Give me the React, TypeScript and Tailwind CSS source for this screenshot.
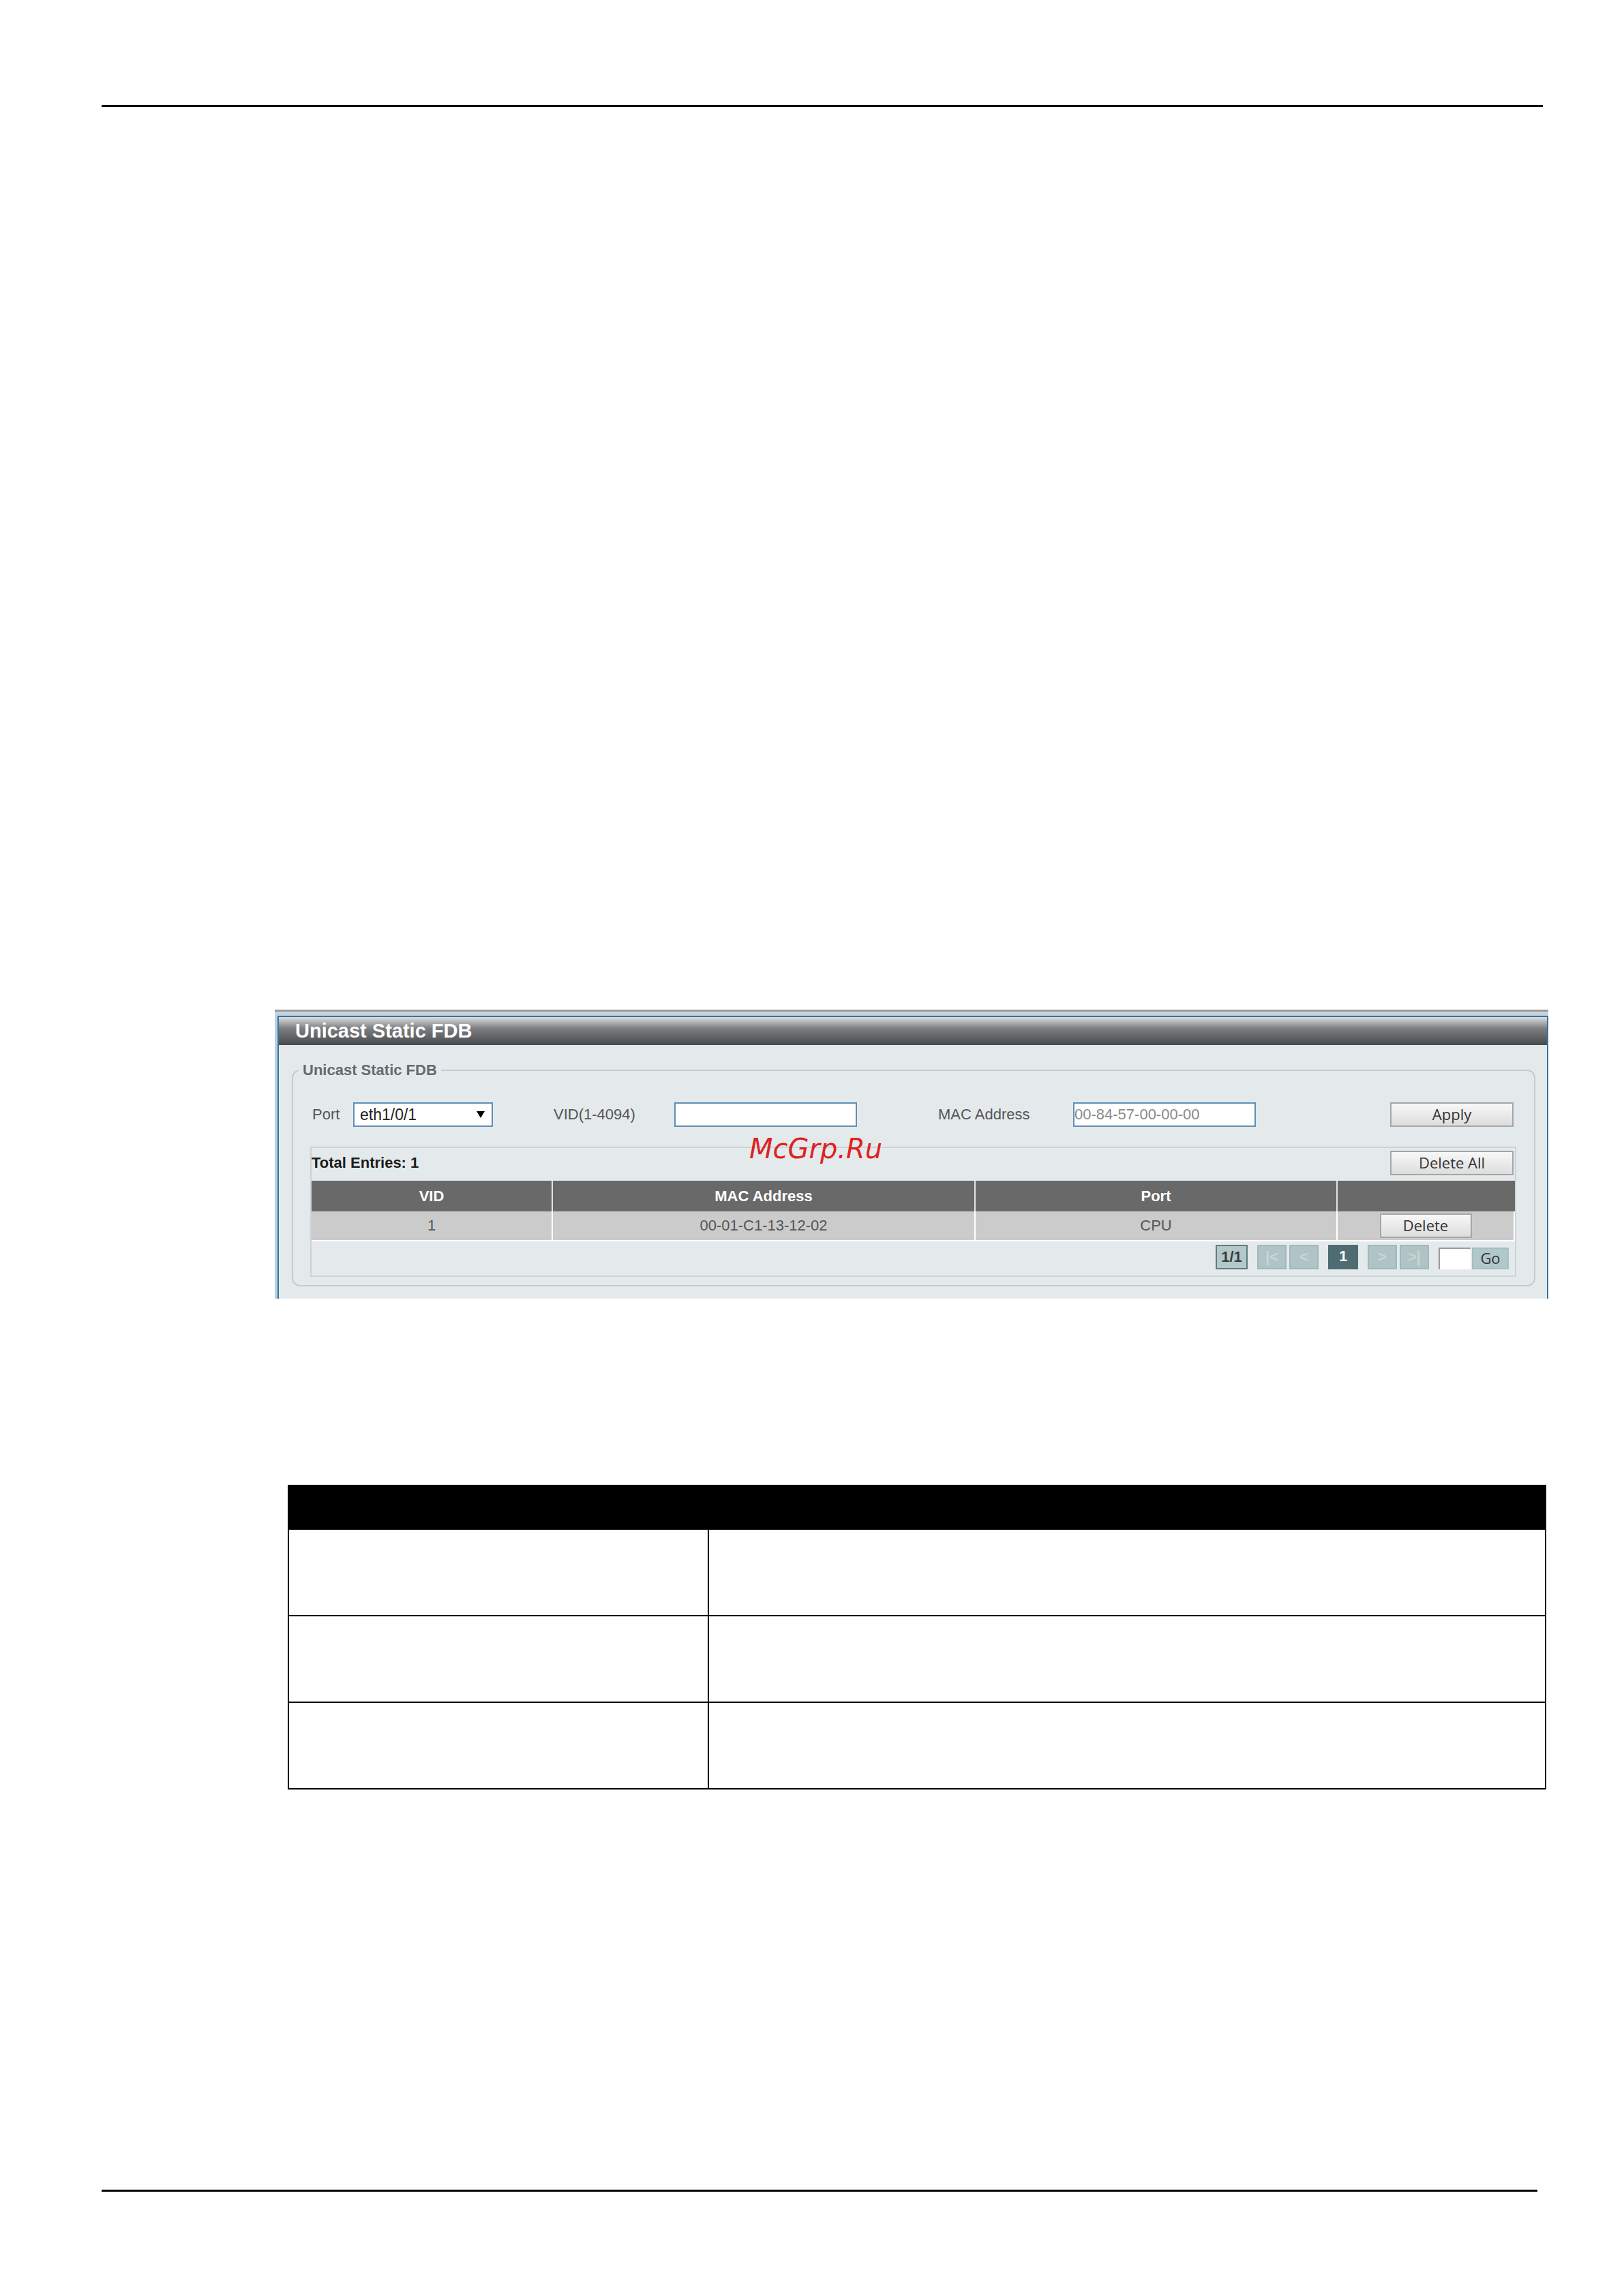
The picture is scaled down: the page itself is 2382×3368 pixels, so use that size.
import React, { useState } from "react";
import clsx from "clsx";

interface FdbEntry {
  vid: number;
  mac: string;
  port: string;
}

const PORTS = ["eth1/0/1", "eth1/0/2", "eth1/0/3", "eth1/0/4"];

const INITIAL_ENTRIES: FdbEntry[] = [
  { vid: 1, mac: "00-01-C1-13-12-02", port: "CPU" },
];

const fieldClass =
  "h-9 bg-white border-2 border-[#5f8fb5] rounded-none focus:outline-none";

const GreyButton: React.FC<React.ButtonHTMLAttributes<HTMLButtonElement>> = ({
  className,
  ...props
}) => (
  <button
    type="button"
    className={clsx(
      "h-9 border-2 border-[#a6a6a6] bg-linear-to-b from-[#f8f8f8] to-[#dddddd] pb-0.5 font-['Open_Sans',sans-serif] text-[22px] leading-[30px] text-[#333333]",
      className,
    )}
    {...props}
  />
);

const PageButton: React.FC<React.ButtonHTMLAttributes<HTMLButtonElement>> = ({
  className,
  ...props
}) => (
  <button
    type="button"
    disabled
    className={clsx(
      "h-9 w-[43px] border-2 border-[#a0b8ba] bg-[#b0c4c6] text-[22px] leading-8 font-bold text-[#cbd5d6]",
      className,
    )}
    {...props}
  />
);

const UnicastStaticFdb: React.FC = () => {
  const [port, setPort] = useState(PORTS[0]);
  const [vid, setVid] = useState("");
  const [mac, setMac] = useState("");
  const [entries, setEntries] = useState(INITIAL_ENTRIES);

  const handleApply = () => {
    if (!vid || !mac) return;
    setEntries([...entries, { vid: Number(vid), mac, port }]);
  };

  return (
    <section className="relative border-t-3 border-[#9b9c9c] bg-[#cfd3d5] text-[22px] leading-7 text-[#555555]">
      <div className="mt-1 border-t-2 border-l-4 border-[#b4d3e6]">
        <div className="border-2 border-b-0 border-[#3f7195] bg-[#e4eaeb] pb-[18px]">
          <h1 className="h-[41px] bg-linear-to-b from-[#dedfdf] via-[#7d7f81] via-40% to-[#484c4f] pl-6 text-[29px] leading-[41px] font-bold text-white">
            Unicast Static FDB
          </h1>

          <fieldset className="mt-[23px] mr-[17px] ml-[19px] rounded-xl border-2 border-[#c2cdcf] pr-[26px] pb-3 pl-[25px]">
            <legend className="-ml-[17px] px-1.5 font-bold text-[#666a6e]">
              Unicast Static FDB
            </legend>

            <div className="flex items-center pt-[33px] pr-1 pl-[3px]">
              <label htmlFor="port" className="w-[60px]">
                Port
              </label>
              <div className="relative">
                <select
                  id="port"
                  value={port}
                  onChange={(e) => setPort(e.target.value)}
                  className={clsx(
                    fieldClass,
                    "block w-[205px] appearance-none pl-2 text-[23px] text-[#222222]",
                  )}
                >
                  {PORTS.map((p) => (
                    <option key={p}>{p}</option>
                  ))}
                </select>
                <svg
                  viewBox="0 0 12 10"
                  className="pointer-events-none absolute top-[13px] right-3 h-2.5 w-3 fill-black"
                >
                  <path d="M0 0h12L6 10z" />
                </svg>
              </div>

              <label htmlFor="vid" className="ml-[89px] w-[177px]">
                VID(1-4094)
              </label>
              <input
                id="vid"
                value={vid}
                onChange={(e) => setVid(e.target.value)}
                className={clsx(fieldClass, "w-[268px]")}
              />

              <label htmlFor="mac" className="ml-[119px] w-[198px]">
                MAC Address
              </label>
              <input
                id="mac"
                value={mac}
                placeholder="00-84-57-00-00-00"
                onChange={(e) => setMac(e.target.value)}
                className={clsx(
                  fieldClass,
                  "w-[268px] placeholder:text-[#8a8a8a]",
                )}
              />

              <GreyButton className="ml-auto w-[181px]" onClick={handleApply}>
                Apply
              </GreyButton>
            </div>

            <div className="mt-[29px] border-2 border-[#ccd3d5]">
              <div className="flex items-center justify-between pt-1 pr-0.5 pb-2">
                <p className="font-bold text-[#1c1c1c]">
                  Total Entries: {entries.length}
                </p>
                <GreyButton
                  className="w-[181px]"
                  onClick={() => setEntries([])}
                >
                  Delete All
                </GreyButton>
              </div>

              <table className="w-full table-fixed border-separate border-spacing-0 text-center">
                <thead>
                  <tr className="h-[45px] bg-[#696969] text-white">
                    <th className="w-[354px] border-r-2 border-[#e4e4e4] p-0">
                      VID
                    </th>
                    <th className="w-[620px] border-r-2 border-[#e4e4e4] p-0">
                      MAC Address
                    </th>
                    <th className="w-[531px] border-r-2 border-[#e4e4e4] p-0">
                      Port
                    </th>
                    <th className="p-0" aria-label="Action" />
                  </tr>
                </thead>
                <tbody>
                  {entries.map((entry) => (
                    <tr
                      key={entry.mac}
                      className="h-11 bg-[#cbcbcb] *:border-r-2 *:border-b-2 *:border-white *:p-0"
                    >
                      <td>{entry.vid}</td>
                      <td>{entry.mac}</td>
                      <td>{entry.port}</td>
                      <td>
                        <GreyButton
                          className="mx-auto block w-[135px]"
                          onClick={() =>
                            setEntries(entries.filter((e) => e !== entry))
                          }
                        >
                          Delete
                        </GreyButton>
                      </td>
                    </tr>
                  ))}
                </tbody>
              </table>

              <div className="flex items-end justify-end gap-3.5 pt-[5px] pr-[9px] pb-[9px]">
                <span className="h-9 w-[47px] border-2 border-[#627b7e] bg-[#b2c8cb] text-center leading-8 font-bold text-[#3a3a3a]">
                  1/1
                </span>
                <div className="flex gap-1">
                  <PageButton>|&lt;</PageButton>
                  <PageButton>&lt;</PageButton>
                </div>
                <span className="h-9 w-11 bg-[#4e6c72] text-center leading-[34px] font-bold text-white">
                  1
                </span>
                <div className="flex gap-1">
                  <PageButton>&gt;</PageButton>
                  <PageButton>&gt;|</PageButton>
                </div>
                <div className="flex gap-0.5">
                  <input
                    aria-label="Page"
                    className="h-8 w-[47px] border-t-2 border-l-2 border-[#9a9a9a] bg-white focus:outline-none"
                  />
                  <button
                    type="button"
                    className="h-8 w-[54px] border-2 border-[#a3bfc2] bg-[#b0c8cb] pb-0.5 font-['Open_Sans',sans-serif] leading-[26px] text-[#333333]"
                  >
                    Go
                  </button>
                </div>
              </div>
            </div>
          </fieldset>
        </div>
      </div>

      <span className="pointer-events-none absolute top-[177px] left-[696px] font-['DejaVu_Sans',sans-serif] text-[40px] leading-[48px] text-[#dd2222] italic">
        McGrp.Ru
      </span>
    </section>
  );
};

const ParameterTable: React.FC = () => (
  <table className="w-full table-fixed border-collapse border-2 border-black">
    <thead>
      <tr className="h-16 bg-black">
        <th className="w-[616px]" aria-label="Parameter" />
        <th aria-label="Description" />
      </tr>
    </thead>
    <tbody>
      {[0, 1, 2].map((row) => (
        <tr key={row} className="h-[127px]">
          <td className="border-2 border-black" />
          <td className="border-2 border-black" />
        </tr>
      ))}
    </tbody>
  </table>
);

const App: React.FC = () => {
  return (
    <div className="min-h-screen bg-white pt-[154px] pl-[149px] font-['Liberation_Sans',Arial,sans-serif]">
      <hr className="mr-[119px] border-t-3 border-black" />
      <main className="mt-[1324px] mr-[111px] ml-[254px]">
        <UnicastStaticFdb />
        <div className="mt-[273px] mr-[3px] ml-[19px]">
          <ParameterTable />
        </div>
      </main>
      <hr className="mt-[587px] mr-[127px] border-t-3 border-black" />
    </div>
  );
};

export default App;
